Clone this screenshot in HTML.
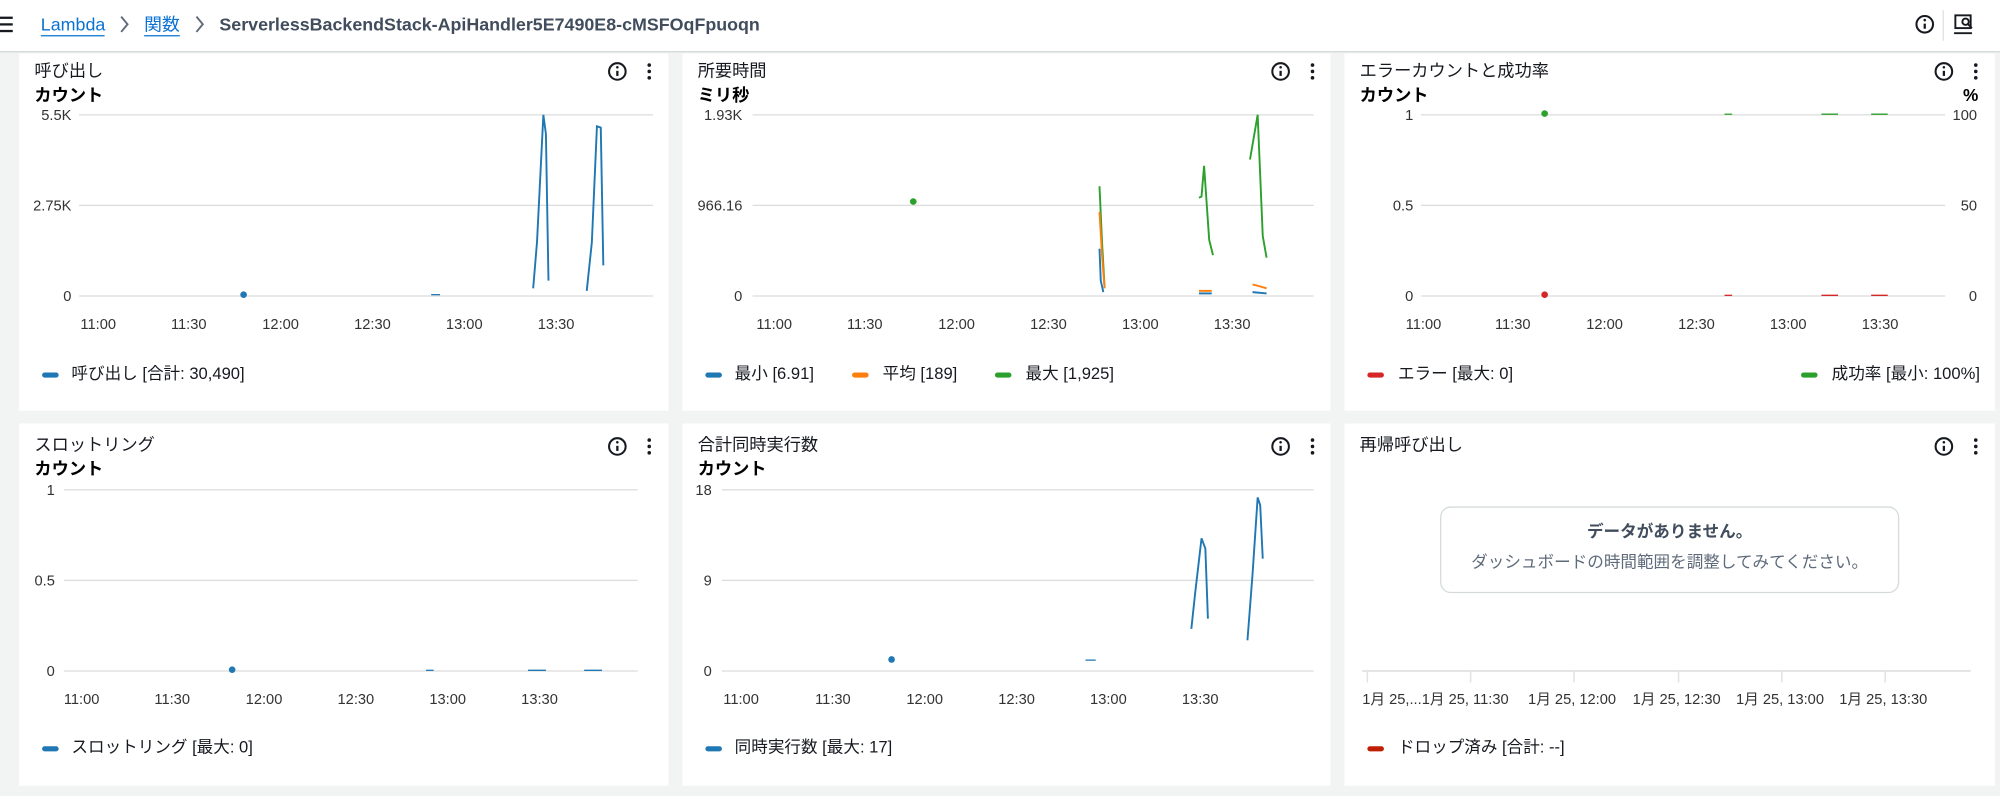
<!DOCTYPE html>
<html><head><meta charset="utf-8"><style>
html,body{margin:0;padding:0;background:#f2f3f3;width:2000px;height:796px;overflow:hidden}
svg{display:block}
text{font-family:"Liberation Sans","Noto Sans CJK JP",sans-serif}
.t{font-size:13.5px;fill:#16191f}
.s{font-size:13.5px;font-weight:bold;fill:#000}
.a{font-size:11.5px;fill:#333}
.l{font-size:13px;fill:#16191f}
.g{stroke:#dcdcdc;stroke-width:1}
</style></head><body>
<svg width="2000" height="796" viewBox="0 0 1568 624" xmlns="http://www.w3.org/2000/svg">
<defs>
<g id="icons">
<circle cx="0" cy="0" r="6.5" fill="none" stroke="#16191f" stroke-width="1.6"/>
<line x1="0" y1="-0.5" x2="0" y2="3.5" stroke="#16191f" stroke-width="1.8"/>
<circle cx="0" cy="-3.3" r="1" fill="#16191f"/>
<circle cx="25" cy="-5" r="1.4" fill="#16191f"/><circle cx="25" cy="0" r="1.4" fill="#16191f"/><circle cx="25" cy="5" r="1.4" fill="#16191f"/>
</g>
</defs>
<!-- header -->
<rect x="0" y="0" width="1568" height="40" fill="#fff"/>
<line x1="0" y1="40.5" x2="1568" y2="40.5" stroke="#d5dbdb"/>
<rect x="0" y="13" width="10" height="1.8" fill="#16191f"/><rect x="0" y="18.2" width="10" height="1.8" fill="#16191f"/><rect x="0" y="23.4" width="10" height="1.8" fill="#16191f"/>
<text x="32" y="24" style="font-size:14px;fill:#0972d3">Lambda</text>
<line x1="32" y1="28" x2="82" y2="28" stroke="#0972d3"/>
<path d="M95 13 L100 19 L95 25" fill="none" stroke="#5f6b7a" stroke-width="1.5"/>
<text x="113" y="24" style="font-size:14px;fill:#0972d3">関数</text>
<line x1="113" y1="28" x2="141" y2="28" stroke="#0972d3"/>
<path d="M154 13 L159 19 L154 25" fill="none" stroke="#5f6b7a" stroke-width="1.5"/>
<text x="172" y="24" style="font-size:14px;font-weight:bold;fill:#414d5c">ServerlessBackendStack-ApiHandler5E7490E8-cMSFOqFpuoqn</text>
<g transform="translate(1509,19)"><circle r="6.5" fill="none" stroke="#16191f" stroke-width="1.6"/><line x1="0" y1="-0.5" x2="0" y2="3.5" stroke="#16191f" stroke-width="1.8"/><circle cy="-3.3" r="1" fill="#16191f"/></g>
<line x1="1523.5" y1="8" x2="1523.5" y2="32" stroke="#e0e0e0"/>
<g fill="none" stroke="#16191f" stroke-width="1.5"><rect x="1533" y="12" width="12" height="10"/><line x1="1532" y1="26" x2="1546" y2="26"/><circle cx="1541" cy="17" r="2.5"/><line x1="1543" y1="19" x2="1546" y2="22"/></g>

<!-- cards -->
<rect x="15" y="42" width="509" height="280" fill="#fff"/>
<rect x="535" y="42" width="508" height="280" fill="#fff"/>
<rect x="1054" y="42" width="514" height="280" fill="#fff"/>
<rect x="15" y="332" width="509" height="284" fill="#fff"/>
<rect x="535" y="332" width="508" height="284" fill="#fff"/>
<rect x="1054" y="332" width="514" height="284" fill="#fff"/>

<!-- card1 -->
<text class="t" x="27" y="60">呼び出し</text>
<text class="s" x="27" y="79">カウント</text>
<use href="#icons" x="484" y="56"/>
<line class="g" x1="62" y1="90" x2="512" y2="90"/><line class="g" x1="62" y1="161" x2="512" y2="161"/><line class="g" x1="62" y1="232" x2="512" y2="232"/>
<text class="a" x="56" y="94" text-anchor="end">5.5K</text>
<text class="a" x="56" y="165" text-anchor="end">2.75K</text>
<text class="a" x="56" y="236" text-anchor="end">0</text>
<g class="a" text-anchor="middle"><text x="77" y="258">11:00</text><text x="148" y="258">11:30</text><text x="220" y="258">12:00</text><text x="292" y="258">12:30</text><text x="364" y="258">13:00</text><text x="436" y="258">13:30</text></g>
<circle cx="191" cy="231" r="2.6" fill="#1f77b4"/>
<line x1="338" y1="231" x2="345" y2="231" stroke="#1f77b4"/>
<polyline points="418,226 421,190 426,90 428,105 430,220" fill="none" stroke="#1f77b4" stroke-width="1.5"/>
<polyline points="460,228 464,190 468,99 471,100 473,208" fill="none" stroke="#1f77b4" stroke-width="1.5"/>
<rect x="33" y="292" width="13" height="4" rx="2" fill="#1f77b4"/>
<text class="l" x="56" y="297">呼び出し [合計: 30,490]</text>

<!-- card2 -->
<text class="t" x="547" y="60">所要時間</text>
<text class="s" x="547" y="79">ミリ秒</text>
<use href="#icons" x="1004" y="56"/>
<line class="g" x1="590" y1="90" x2="1030" y2="90"/><line class="g" x1="590" y1="161" x2="1030" y2="161"/><line class="g" x1="590" y1="232" x2="1030" y2="232"/>
<text class="a" x="582" y="94" text-anchor="end">1.93K</text>
<text class="a" x="582" y="165" text-anchor="end">966.16</text>
<text class="a" x="582" y="236" text-anchor="end">0</text>
<g class="a" text-anchor="middle"><text x="607" y="258">11:00</text><text x="678" y="258">11:30</text><text x="750" y="258">12:00</text><text x="822" y="258">12:30</text><text x="894" y="258">13:00</text><text x="966" y="258">13:30</text></g>
<circle cx="716" cy="158" r="2.6" fill="#2ca02c"/>
<polyline points="862,146 864,190 866,225" fill="none" stroke="#2ca02c" stroke-width="1.5"/>
<polyline points="862,166 864,200 866,226" fill="none" stroke="#ff7f0e" stroke-width="1.5"/>
<polyline points="862,195 863,220 865,229" fill="none" stroke="#1f77b4" stroke-width="1.5"/>
<polyline points="940,155 942,154 944,130 948,188 951,200" fill="none" stroke="#2ca02c" stroke-width="1.5"/>
<polyline points="980,125 986,90 990,185 993,202" fill="none" stroke="#2ca02c" stroke-width="1.5"/>
<polyline points="940,228 950,228" fill="none" stroke="#ff7f0e" stroke-width="1.5"/>
<polyline points="982,223 986,224 993,226" fill="none" stroke="#ff7f0e" stroke-width="1.5"/>
<polyline points="940,230 950,230" fill="none" stroke="#1f77b4" stroke-width="1.5"/>
<polyline points="982,229 993,230" fill="none" stroke="#1f77b4" stroke-width="1.5"/>
<rect x="553" y="292" width="13" height="4" rx="2" fill="#1f77b4"/>
<text class="l" x="576" y="297">最小 [6.91]</text>
<rect x="668" y="292" width="13" height="4" rx="2" fill="#ff7f0e"/>
<text class="l" x="692" y="297">平均 [189]</text>
<rect x="780" y="292" width="13" height="4" rx="2" fill="#2ca02c"/>
<text class="l" x="804" y="297">最大 [1,925]</text>

<!-- card3 -->
<text class="t" x="1066" y="60">エラーカウントと成功率</text>
<text class="s" x="1066" y="79">カウント</text>
<text class="s" x="1551" y="79" text-anchor="end">%</text>
<use href="#icons" x="1524" y="56"/>
<line class="g" x1="1114" y1="90" x2="1525" y2="90"/><line class="g" x1="1114" y1="161" x2="1525" y2="161"/><line class="g" x1="1114" y1="232" x2="1525" y2="232"/>
<text class="a" x="1108" y="94" text-anchor="end">1</text>
<text class="a" x="1108" y="165" text-anchor="end">0.5</text>
<text class="a" x="1108" y="236" text-anchor="end">0</text>
<text class="a" x="1550" y="94" text-anchor="end">100</text>
<text class="a" x="1550" y="165" text-anchor="end">50</text>
<text class="a" x="1550" y="236" text-anchor="end">0</text>
<g class="a" text-anchor="middle"><text x="1116" y="258">11:00</text><text x="1186" y="258">11:30</text><text x="1258" y="258">12:00</text><text x="1330" y="258">12:30</text><text x="1402" y="258">13:00</text><text x="1474" y="258">13:30</text></g>
<circle cx="1211" cy="89" r="2.6" fill="#2ca02c"/>
<circle cx="1211" cy="231" r="2.6" fill="#d62728"/>
<g stroke="#2ca02c"><line x1="1352" y1="89.5" x2="1358" y2="89.5"/><line x1="1428" y1="89.5" x2="1441" y2="89.5"/><line x1="1467" y1="89.5" x2="1480" y2="89.5"/></g>
<g stroke="#d62728"><line x1="1352" y1="231.5" x2="1358" y2="231.5"/><line x1="1428" y1="231.5" x2="1441" y2="231.5"/><line x1="1467" y1="231.5" x2="1480" y2="231.5"/></g>
<rect x="1072" y="292" width="13" height="4" rx="2" fill="#d62728"/>
<text class="l" x="1096" y="297">エラー [最大: 0]</text>
<rect x="1412" y="292" width="13" height="4" rx="2" fill="#2ca02c"/>
<text class="l" x="1436" y="297">成功率 [最小: 100%]</text>
<rect x="1564" y="42" width="4" height="280" fill="#f2f3f3"/>

<!-- card4 -->
<text class="t" x="27" y="353">スロットリング</text>
<text class="s" x="27" y="372">カウント</text>
<use href="#icons" x="484" y="350"/>
<line class="g" x1="50" y1="384" x2="500" y2="384"/><line class="g" x1="50" y1="455" x2="500" y2="455"/><line class="g" x1="50" y1="526" x2="500" y2="526"/>
<text class="a" x="43" y="388" text-anchor="end">1</text>
<text class="a" x="43" y="459" text-anchor="end">0.5</text>
<text class="a" x="43" y="530" text-anchor="end">0</text>
<g class="a" text-anchor="middle"><text x="64" y="552">11:00</text><text x="135" y="552">11:30</text><text x="207" y="552">12:00</text><text x="279" y="552">12:30</text><text x="351" y="552">13:00</text><text x="423" y="552">13:30</text></g>
<circle cx="182" cy="525" r="2.6" fill="#1f77b4"/>
<g stroke="#1f77b4"><line x1="334" y1="525.5" x2="340" y2="525.5"/><line x1="414" y1="525.5" x2="428" y2="525.5"/><line x1="458" y1="525.5" x2="472" y2="525.5"/></g>
<rect x="33" y="585" width="13" height="4" rx="2" fill="#1f77b4"/>
<text class="l" x="56" y="590">スロットリング [最大: 0]</text>

<!-- card5 -->
<text class="t" x="547" y="353">合計同時実行数</text>
<text class="s" x="547" y="372">カウント</text>
<use href="#icons" x="1004" y="350"/>
<line class="g" x1="566" y1="384" x2="1030" y2="384"/><line class="g" x1="566" y1="455" x2="1030" y2="455"/><line class="g" x1="566" y1="526" x2="1030" y2="526"/>
<text class="a" x="558" y="388" text-anchor="end">18</text>
<text class="a" x="558" y="459" text-anchor="end">9</text>
<text class="a" x="558" y="530" text-anchor="end">0</text>
<g class="a" text-anchor="middle"><text x="581" y="552">11:00</text><text x="653" y="552">11:30</text><text x="725" y="552">12:00</text><text x="797" y="552">12:30</text><text x="869" y="552">13:00</text><text x="941" y="552">13:30</text></g>
<circle cx="699" cy="517" r="2.6" fill="#1f77b4"/>
<line x1="851" y1="517.5" x2="859" y2="517.5" stroke="#1f77b4"/>
<polyline points="934,493 937,465 942,422 945,430 947,485" fill="none" stroke="#1f77b4" stroke-width="1.5"/>
<polyline points="978,502 982,450 986,390 988,396 990,438" fill="none" stroke="#1f77b4" stroke-width="1.5"/>
<rect x="553" y="585" width="13" height="4" rx="2" fill="#1f77b4"/>
<text class="l" x="576" y="590">同時実行数 [最大: 17]</text>

<!-- card6 -->
<text class="t" x="1066" y="353">再帰呼び出し</text>
<use href="#icons" x="1524" y="350"/>
<rect x="1129.5" y="397.5" width="359" height="67" rx="8" fill="#fff" stroke="#d5dbdb"/>
<text x="1309" y="421" text-anchor="middle" style="font-size:13px;font-weight:bold;fill:#414d5c">データがありません。</text>
<text x="1309" y="445" text-anchor="middle" style="font-size:13px;fill:#5f6b7a">ダッシュボードの時間範囲を調整してみてください。</text>
<line x1="1068" y1="526" x2="1545" y2="526" stroke="#e3e3e3" stroke-width="1.5"/>
<g stroke="#e3e3e3" stroke-width="1.2"><line x1="1072" y1="526" x2="1072" y2="535"/><line x1="1153" y1="526" x2="1153" y2="535"/><line x1="1234" y1="526" x2="1234" y2="535"/><line x1="1316" y1="526" x2="1316" y2="535"/><line x1="1397" y1="526" x2="1397" y2="535"/><line x1="1478" y1="526" x2="1478" y2="535"/></g>
<g class="a"><text x="1068" y="552">1月 25,...1月 25, 11:30</text><text x="1198" y="552">1月 25, 12:00</text><text x="1280" y="552">1月 25, 12:30</text><text x="1361" y="552">1月 25, 13:00</text><text x="1442" y="552">1月 25, 13:30</text></g>
<rect x="1072" y="585" width="13" height="4" rx="2" fill="#bf1f00"/>
<text class="l" x="1096" y="590">ドロップ済み [合計: --]</text>
<rect x="1564" y="332" width="4" height="284" fill="#f2f3f3"/>
</svg>
</body></html>
